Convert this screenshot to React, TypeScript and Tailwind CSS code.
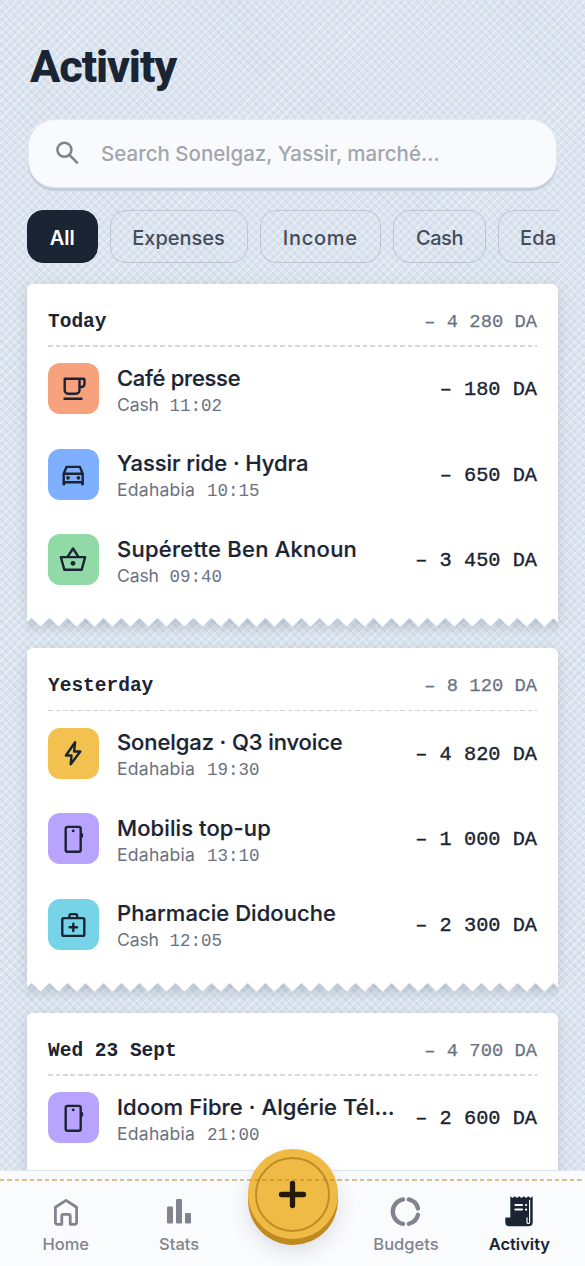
import React from "react";

type IconName = "cup" | "car" | "basket" | "bolt" | "phone" | "medical";

interface Entry {
  icon: IconName;
  tile: string;
  title: string;
  spacing: string;
  account: string;
  time: string;
  amount: string;
}

interface Day {
  label: string;
  total: string;
  entries: Entry[];
}

const days: Day[] = [
  {
    label: "Today",
    total: "– 4 280 DA",
    entries: [
      { icon: "cup", tile: "bg-[#f7a27c]", title: "Café presse", spacing: "tracking-[-0.28px]", account: "Cash", time: "11:02", amount: "– 180 DA" },
      { icon: "car", tile: "bg-[#7fb0ff]", title: "Yassir ride · Hydra", spacing: "tracking-[-0.04px]", account: "Edahabia", time: "10:15", amount: "– 650 DA" },
      { icon: "basket", tile: "bg-[#91daa7]", title: "Supérette Ben Aknoun", spacing: "tracking-[0.24px]", account: "Cash", time: "09:40", amount: "– 3 450 DA" },
    ],
  },
  {
    label: "Yesterday",
    total: "– 8 120 DA",
    entries: [
      { icon: "bolt", tile: "bg-[#f3c14f]", title: "Sonelgaz · Q3 invoice", spacing: "tracking-[-0.1px]", account: "Edahabia", time: "19:30", amount: "– 4 820 DA" },
      { icon: "phone", tile: "bg-[#b8a3ff]", title: "Mobilis top-up", spacing: "tracking-[0.1px]", account: "Edahabia", time: "13:10", amount: "– 1 000 DA" },
      { icon: "medical", tile: "bg-[#76d3e8]", title: "Pharmacie Didouche", spacing: "tracking-[0.05px]", account: "Cash", time: "12:05", amount: "– 2 300 DA" },
    ],
  },
  {
    label: "Wed 23 Sept",
    total: "– 4 700 DA",
    entries: [
      { icon: "phone", tile: "bg-[#b8a3ff]", title: "Idoom Fibre · Algérie Tél…", spacing: "tracking-[0.1px]", account: "Edahabia", time: "21:00", amount: "– 2 600 DA" },
    ],
  },
];

function TileIcon({ name }: { name: IconName }) {
  return (
    <svg viewBox="0.5 0.5 51 51" className="size-[51px]" fill="none" stroke="#1b2433" strokeWidth="2.4" strokeLinecap="round" strokeLinejoin="round">
      {name === "cup" && (
        <>
          <path d="M17.2 16.2H36a1 1 0 0 1 1 1V21.500a3 3 0 0 1-3 3h-2M32 16.2v11.600a3.400 3.400 0 0 1-3.400 3.400h-8a3.400 3.400 0 0 1-3.400-3.400V16.2" />
          <path d="M17 36.200h17" />
        </>
      )}
      {name === "car" && (
        <>
          <path d="M16.2 25.2L19 18.400h13.400l2.800 6.800v8.600h-19zM16.2 25.2h19" />
          <path d="M16.400 34.500v1.200M35 34.500v1.200" strokeWidth="2.800" />
          <circle cx="20.500" cy="29.400" r="1.800" fill="#1b2433" stroke="none" />
          <circle cx="30.900" cy="29.400" r="1.800" fill="#1b2433" stroke="none" />
        </>
      )}
      {name === "basket" && (
        <>
          <path d="M13.400 23.600h24.200l-3.400 12.600H16.800z" />
          <path d="M20.200 23.200l5.300-8.200 5.300 8.200" />
          <circle cx="25.500" cy="29.800" r="2.400" fill="#1b2433" stroke="none" />
        </>
      )}
      {name === "bolt" && <path d="M27.600 14.800L18.400 28h5.600l-.8 8.800L32.800 24h-6.200z" />}
      {name === "phone" && (
        <>
          <rect x="18.2" y="14.400" width="15" height="24.800" rx="1.800" />
          <path d="M34.400 20.800v4.200" strokeLinecap="butt" />
          <circle cx="25.700" cy="18.400" r="1.400" fill="#1b2433" stroke="none" />
        </>
      )}
      {name === "medical" && (
        <>
          <rect x="14.800" y="19.600" width="22" height="17.800" rx="1.400" />
          <path d="M22 19.400v-2.400a1.400 1.400 0 0 1 1.400-1.400h4.800a1.400 1.400 0 0 1 1.400 1.400v2.400" />
          <path d="M25.800 25.100v7.400M22.100 28.800h7.400" />
        </>
      )}
    </svg>
  );
}

function Row({ entry }: { entry: Entry }) {
  return (
    <div className="flex h-[51px] items-center">
      <div className={"size-[51px] shrink-0 rounded-[12px] " + entry.tile}>
        <TileIcon name={entry.icon} />
      </div>
      <div className="ml-[18px] min-w-0 flex-1 whitespace-nowrap pt-[4px]">
        <div className={"text-[22px] font-medium leading-[29px] text-[#1b2433] [-webkit-text-stroke:0.2px_#1b2433] " + entry.spacing}>{entry.title}</div>
        <div className="flex items-baseline leading-[24px] text-[#6a7282]">
          <span className={entry.account === "Cash" ? "w-[52.500px] text-[17.600px] tracking-[-0.15px]" : "w-[90px] text-[17.600px] tracking-[0.22px]"}>{entry.account}</span>
          <span className="font-['Liberation_Mono',monospace] text-[17.500px]">{entry.time}</span>
        </div>
      </div>
      <div className="whitespace-nowrap pt-[4px] font-['Liberation_Mono',monospace] text-[20.300px] text-[#1b2433] [-webkit-text-stroke:0.35px_#1b2433]">{entry.amount}</div>
    </div>
  );
}

function Receipt({ day }: { day: Day }) {
  return (
    <section className="relative h-[334.5px] rounded-t-[6px] bg-white px-[21px] pt-[19.5px] shadow-[0_4px_14px_rgba(60,80,110,0.2)]">
      <div className="flex h-[36px] items-center justify-between font-['Liberation_Mono',monospace]">
        <h2 className="pt-[3px] text-[19.500px] font-bold text-[#1b2433]">{day.label}</h2>
        <span className="pt-[2px] text-[18.800px] text-[#6a7282] [-webkit-text-stroke:0.25px_#6a7282]">{day.total}</span>
      </div>
      <div className="mt-[6px] h-[1.5px] bg-[repeating-linear-gradient(90deg,#d3d6da_0_4.5px,transparent_4.5px_7.5px)]" />
      <div className="mt-[16.5px] flex flex-col gap-[34.5px]">
        {day.entries.map((entry) => (
          <Row key={entry.title} entry={entry} />
        ))}
      </div>
      <svg className="absolute left-0 top-full" width="531" height="20" viewBox="0 0 531 20">
        <defs>
          <linearGradient id={"fade-" + day.label.slice(0, 3)} x1="0" y1="0" x2="0" y2="1">
            <stop offset="0" stopColor="#44546c" stopOpacity="0.13" />
            <stop offset="1" stopColor="#44546c" stopOpacity="0" />
          </linearGradient>
          <pattern id={"teeth-" + day.label.slice(0, 3)} width="18" height="9" x="4.5" y="0" patternUnits="userSpaceOnUse">
            <path d="M0 0L9 8.800L18 0z" fill="#fff" />
          </pattern>
        </defs>
        <rect width="531" height="20" fill={"url(#fade-" + day.label.slice(0, 3) + ")"} />
        <rect width="531" height="9" fill={"url(#teeth-" + day.label.slice(0, 3) + ")"} />
      </svg>
    </section>
  );
}

const chips = [
  { label: "All", style: "w-[70.500px] justify-center border-[#1b2433] bg-[#1b2433] text-white font-semibold" },
  { label: "Expenses", style: "w-[138px] justify-center border-[#bdc5d1] text-[#444c5b]" },
  { label: "Income", style: "w-[121.500px] justify-center border-[#bdc5d1] text-[#444c5b] tracking-[0.7px]" },
  { label: "Cash", style: "w-[93px] justify-center border-[#bdc5d1] text-[#444c5b] tracking-[-0.4px]" },
  { label: "Edahabia", style: "w-[132px] pl-[21px] border-[#bdc5d1] text-[#444c5b] tracking-[0.3px]" },
];

function NavIcon({ name }: { name: string }) {
  return (
    <svg viewBox="0 0 36 36" className="size-[36px]" fill="none" stroke="#80848e" strokeWidth="2.8" strokeLinecap="round" strokeLinejoin="round">
      {name === "Home" && <path d="M7.400 13.200L18 6.400l10.600 6.800v15.100a2 2 0 0 1-2 2h-4.400v-8.400a1.600 1.600 0 0 0-1.600-1.600h-5.200a1.600 1.600 0 0 0-1.600 1.600v8.400H9.400a2 2 0 0 1-2-2z" />}
      {name === "Stats" && (
        <g fill="#80848e" stroke="none">
          <rect x="6" y="12.500" width="6" height="17" rx="1.200" />
          <rect x="15" y="5" width="6" height="24.500" rx="1.200" />
          <rect x="24" y="19" width="6" height="10.500" rx="1.200" />
        </g>
      )}
      {name === "Budgets" && (
        <g strokeWidth="4.400">
          <path d="M15 5.400A12.400 12.400 0 0 0 15 29.800" />
          <path d="M20.800 5.400A12.400 12.400 0 0 1 30 14.400" />
          <path d="M30 20.800A12.400 12.400 0 0 1 20.800 29.800" />
        </g>
      )}
      {name === "Activity" && (
        <>
          <path d="M9.300 2.200l2.200 1.800 2.250-1.800L16 4l2.250-1.800L20.500 4l2.250-1.800L25 4l2.250-1.800L29.500 4l2.200-1.800v26a4 4 0 0 1-4 4H8.300a4 4 0 0 1-4-4v-4.700h5z" fill="#1b2433" stroke="none" />
          <path d="M28.600 6.400v21.800a1.200 1.200 0 0 1-2.600 0v-4.400" stroke="#fafbfd" strokeWidth="1.200" />
          <path d="M14.300 11h6.800M14.300 15.600h6.800" stroke="#fafbfd" strokeWidth="2" />
          <path d="M25 11h.1M25 15.600h.1" stroke="#fafbfd" strokeWidth="2.200" />
        </>
      )}
    </svg>
  );
}

function NavItem({ name, className }: { name: string; className: string }) {
  return (
    <div className={"flex flex-1 flex-col items-center pt-[23px] " + className}>
      <NavIcon name={name} />
      <span className="mt-[4px] text-[16.500px] leading-[20px]">{name}</span>
    </div>
  );
}

export default function App() {
  return (
    <div className="relative flex h-[1266px] w-[585px] flex-col overflow-hidden bg-[#dce5ef] bg-[repeating-linear-gradient(-45deg,rgba(255,255,255,0.36)_0_1.5px,transparent_1.5px_6px),repeating-linear-gradient(45deg,rgba(110,130,160,0.11)_0_1.5px,transparent_1.5px_6px)] font-['Inter','Noto_Sans',sans-serif]">
      <main className="flex h-[1170px] flex-col overflow-hidden px-[27px]">
        <h1 className="ml-[3px] mt-[40px] font-['Roboto',sans-serif] text-[45px] font-extrabold leading-[54px] tracking-[-1.1px] text-[#1b2433]">Activity</h1>

        <div className="mx-px mt-[25px] flex h-[69px] shrink-0 items-center rounded-[27px] border border-[#e6e9ef] bg-[#f8fafd] pl-[24px] shadow-[0_3px_1px_#c3ccd8]">
          <svg width="30" height="30" viewBox="0 0 30 30" fill="none" stroke="#7f848a" strokeWidth="2.500">
            <circle cx="11.400" cy="10.800" r="7" />
            <path d="M16.400 15.800l8.400 8.600" />
          </svg>
          <span className="ml-[18px] pt-[2px] text-[20.500px] font-medium text-[#a2a6ac]">Search Sonelgaz, Yassir, marché…</span>
        </div>

        <div className="mt-[22px] flex h-[52.500px] shrink-0 gap-[12px] overflow-hidden">
          {chips.map((chip) => (
            <div key={chip.label} className={"flex shrink-0 items-center rounded-[16px] border-[1.500px] pt-[3px] text-[20px] font-medium " + chip.style}>
              {chip.label}
            </div>
          ))}
        </div>

        <div className="-mx-[27px] mt-[21px] flex flex-col gap-[30px] px-[27px]">
          {days.map((day) => (
            <Receipt key={day.label} day={day} />
          ))}
        </div>
      </main>

      <nav className="relative flex h-[96px] border-t border-[#e2e6ed] bg-[#fafbfd] px-[9px]">
        <NavItem name="Home" className="font-medium text-[#80848e]" />
        <NavItem name="Stats" className="font-medium text-[#80848e]" />
        <div className="flex-1" />
        <NavItem name="Budgets" className="font-medium text-[#80848e]" />
        <NavItem name="Activity" className="font-semibold text-[#1b2433]" />
        <button className="absolute left-[247.500px] top-[-22px] flex size-[90px] items-center justify-center rounded-full bg-[#efbb45] shadow-[0_6px_0_#bf8a20,0_12px_20px_rgba(30,45,70,0.14)]" aria-label="Add">
          <span className="flex size-[75px] items-center justify-center rounded-full border-2 border-[#c08c26]">
            <svg width="30" height="30" viewBox="0 0 30 30" stroke="#251a08" strokeWidth="5.300" strokeLinecap="round">
              <path d="M14.500 4.500v22M3.500 15.500h22" />
            </svg>
          </span>
        </button>
        <div className="absolute inset-x-0 top-[8px] h-[1.500px] bg-[repeating-linear-gradient(90deg,rgba(184,130,30,0.5)_0_4.500px,transparent_4.500px_7.500px)]" />
      </nav>
    </div>
  );
}
